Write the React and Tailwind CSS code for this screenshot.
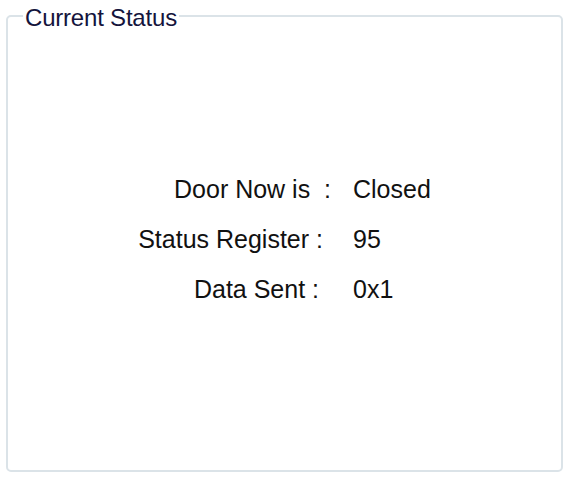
import React from 'react';

const rows = [
    { label: 'Door Now is  :', value: 'Closed', pr: 'pr-[1px]' },
    { label: 'Status Register :', value: '95', pr: 'pr-[9px]' },
    { label: 'Data Sent :', value: '0x1', pr: 'pr-[13px]' },
];

export default function App() {
    return (
        <div className="h-[482px] w-[573px] bg-white font-['Liberation_Sans',Arial,sans-serif] text-[#111]">
            <fieldset className="ml-[6px] mr-[10px] h-[472px] rounded-[5px] border-2 border-[#dbe3e8] px-0">
                <legend className="ml-[15px] px-[2px] text-[24px] leading-[32px] tracking-[-0.2px] text-[#14143c]">
                    <span className="relative top-[2px]">Current Status</span>
                </legend>
                <div className="flex h-[430px] flex-col justify-center gap-[21px] pb-[16px] text-[25px] leading-[29px]">
                    {rows.map((r) => (
                        <div key={r.label} className="flex">
                            <div className={`w-[324px] whitespace-pre text-right ${r.pr}`}>{r.label}</div>
                            <div className="pl-[21px]">{r.value}</div>
                        </div>
                    ))}
                </div>
            </fieldset>
        </div>
    );
}
